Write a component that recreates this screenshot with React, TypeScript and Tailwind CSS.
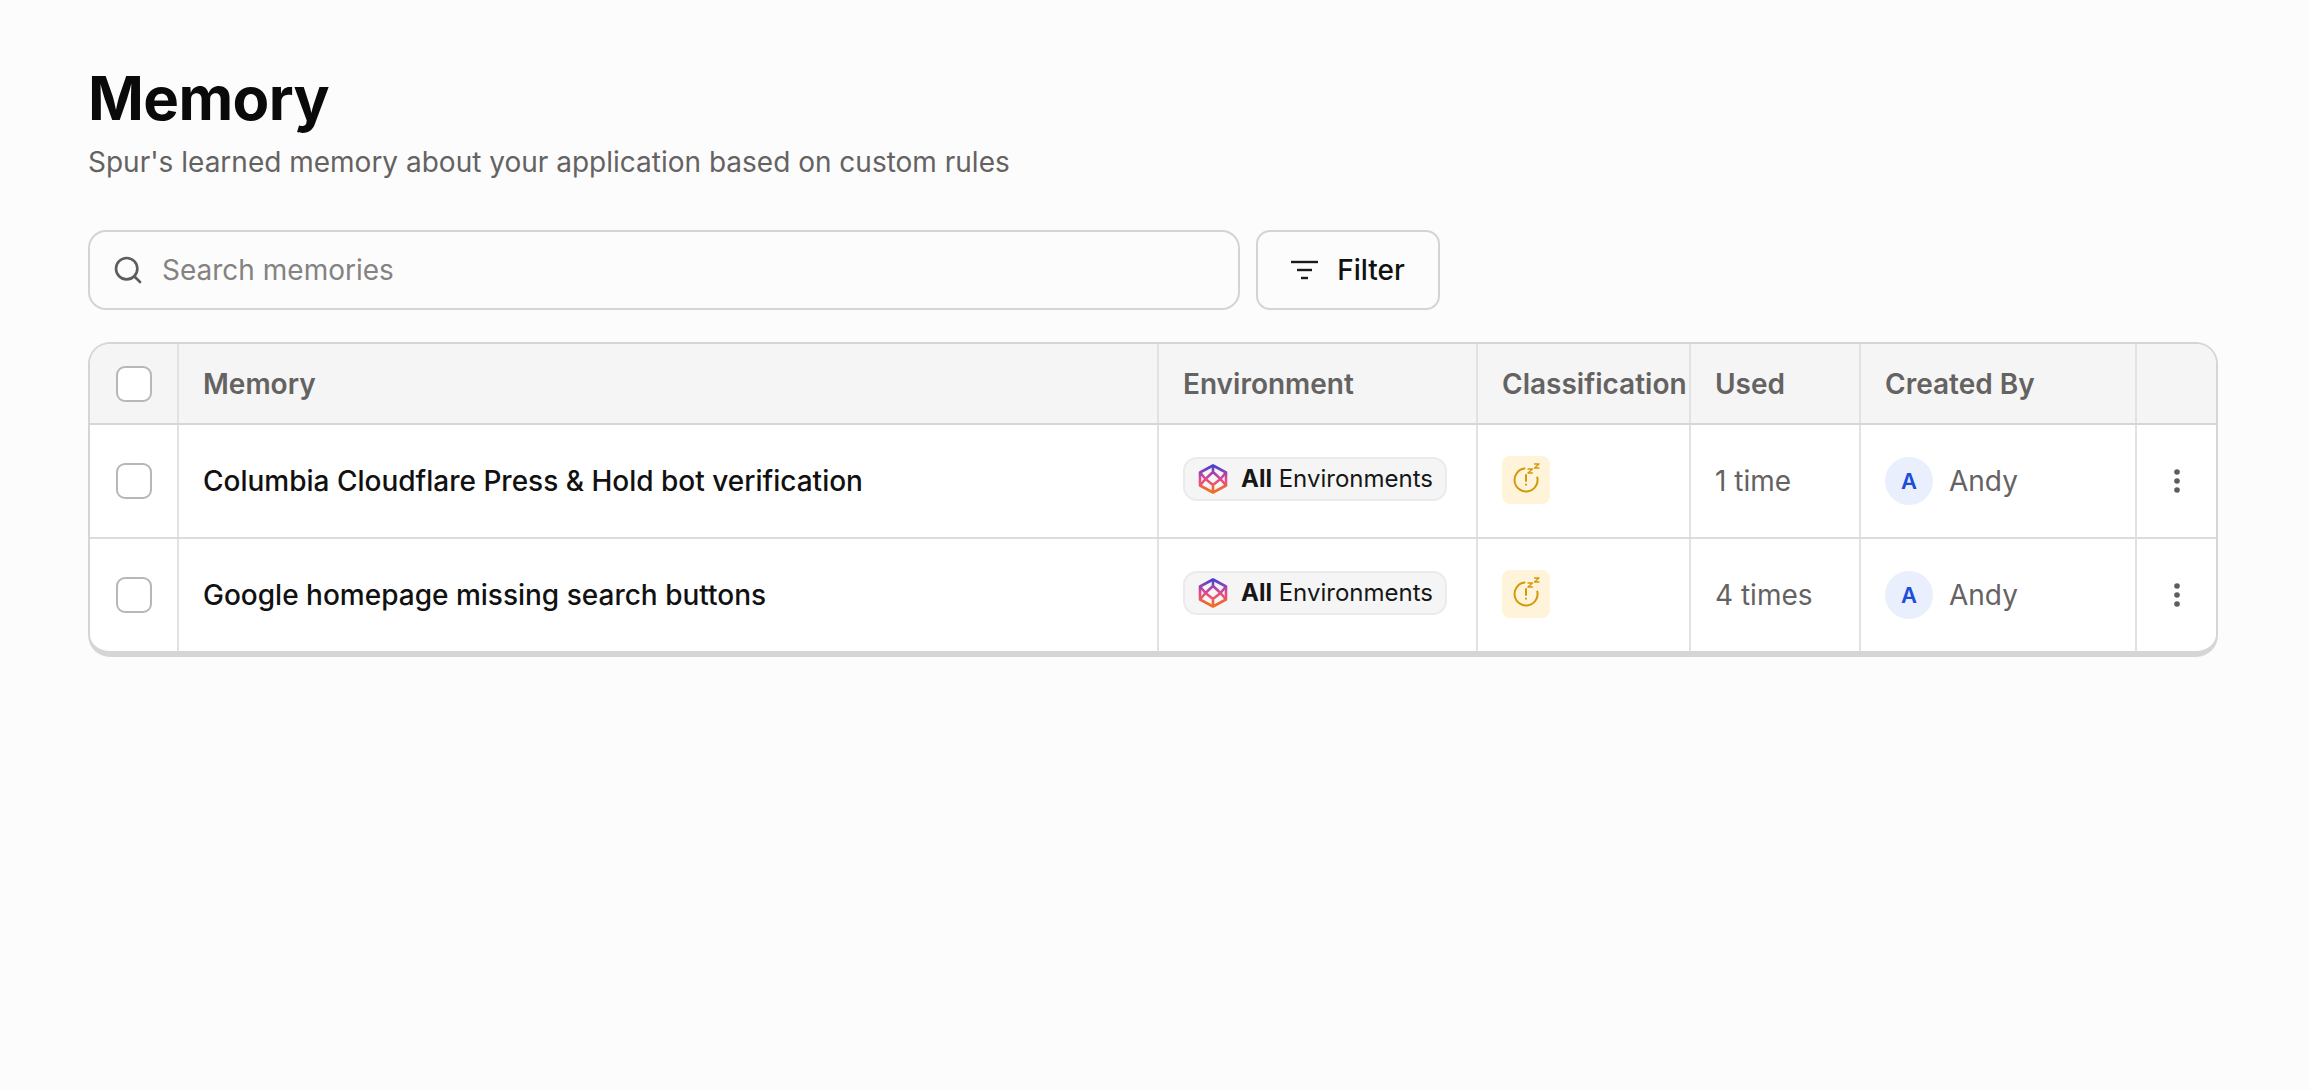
import { Search } from "lucide-react";

const rows = [
  { title: "Columbia Cloudflare Press & Hold bot verification", used: "1 time", height: "h-[114px] border-b-2 border-[#dcdcdc]" },
  { title: "Google homepage missing search buttons", used: "4 times", height: "h-[112px]" },
];

const gridCols = "grid grid-cols-[87px_980px_319px_213px_170px_276px_1fr]";

function Checkbox() {
  return <div className="h-9 w-9 rounded-[9px] border-2 border-[#b8b6b6] bg-white" />;
}

function FilterIcon() {
  return (
    <svg width="27" height="20" viewBox="0 0 27 20" fill="none" stroke="#1a1a1a" strokeWidth="2.4">
      <path d="M0 2h27" />
      <path d="M6 10h15" />
      <path d="M10 18h7" />
    </svg>
  );
}

function EnvIcon({ id }: { id: string }) {
  return (
    <svg width="30" height="30" viewBox="0 0 30 30" fill="none">
      <defs>
        <linearGradient id={id} x1="15" y1="1" x2="15" y2="29" gradientUnits="userSpaceOnUse">
          <stop offset="0" stopColor="#3f3fd8" />
          <stop offset="0.5" stopColor="#e5488f" />
          <stop offset="1" stopColor="#f47216" />
        </linearGradient>
      </defs>
      <g stroke={`url(#${id})`} strokeWidth="2.600" strokeLinejoin="round">
        <path d="M15 1.500 28 8.500v13L15 28.500 2 21.500v-13Z" />
        <path d="M15 8 22.500 15 15 21 7.500 15ZM2 8.500 7.500 15 2 21.500M28 8.500 22.500 15 28 21.500M15 1.500V8M15 21v7.500" />
      </g>
    </svg>
  );
}

function SnoozeIcon() {
  return (
    <svg width="48" height="48" viewBox="0 0 48 48" fill="none" stroke="#d19a0b" strokeWidth="2" strokeLinecap="round" strokeLinejoin="round">
      <path d="M22.500 12.600A11.500 11.500 0 1 0 35.300 21.500" />
      <path d="M24 19v6" />
      <path d="M24 28.600v.1" />
      <path d="M26 13h4.500L26 17h4.500" strokeWidth="1.400" />
      <path d="M32.500 8H37l-4.500 4H37" strokeWidth="1.300" />
    </svg>
  );
}

function DotsIcon() {
  return (
    <svg width="8" height="26" viewBox="0 0 8 26" fill="#5f5c5c">
      <circle cx="4" cy="4" r="2.800" />
      <circle cx="4" cy="13" r="2.800" />
      <circle cx="4" cy="22" r="2.800" />
    </svg>
  );
}

export default function App() {
  return (
    <div className="min-h-screen bg-[#fcfcfc] px-[88px] pt-[62px] font-['Inter',sans-serif]">
      <h1 className="text-[60px] font-bold leading-[72px] tracking-[-0.6px] text-[#0a0a0a]">Memory</h1>
      <p className="mt-[8px] text-[28px] leading-[40px] text-[#656262]">
        Spur's learned memory about your application based on custom rules
      </p>

      <div className="mt-[48px] flex gap-[16px]">
        <div className="flex h-[80px] w-[1152px] items-center gap-[18px] rounded-[18px] border-2 border-[#d4d4d4] bg-[#fcfcfc] pl-[22px]">
          <Search size={32} strokeWidth={2} className="text-[#5f5c5c]" />
          <span className="text-[28px] text-[#858282]">Search memories</span>
        </div>
        <button className="flex h-[80px] w-[184px] items-center justify-center gap-[19px] rounded-[14px] border-2 border-[#d4d4d4] bg-[#fcfcfc] text-[28px] font-medium text-[#111111]">
          <FilterIcon />
          Filter
        </button>
      </div>

      <div className="mt-[32px] w-[2130px] overflow-hidden rounded-[22px] border-2 border-b-[6px] border-[#d6d5d5] bg-white">
        <div className={`${gridCols} h-[81px] border-b-2 border-[#d6d6d6] bg-[#f5f5f5] text-[28px] font-semibold text-[#656262]`}>
          <div className="flex items-center justify-center">
            <Checkbox />
          </div>
          <div className="flex items-center border-l-2 border-[#e2e2e2] pl-[24px]">Memory</div>
          <div className="flex items-center border-l-2 border-[#e2e2e2] pl-[24px]">Environment</div>
          <div className="flex items-center whitespace-nowrap border-l-2 border-[#e2e2e2] pl-[24px]">Classification</div>
          <div className="flex items-center border-l-2 border-[#e2e2e2] pl-[24px]">Used</div>
          <div className="flex items-center border-l-2 border-[#e2e2e2] pl-[24px]">Created By</div>
          <div className="border-l-2 border-[#e2e2e2]" />
        </div>
        {rows.map((row, i) => (
          <div key={row.title} className={`${gridCols} ${row.height}`}>
            <div className="flex items-center justify-center">
              <Checkbox />
            </div>
            <div className="flex items-center border-l-2 border-[#e2e2e2] pl-[24px] text-[28px] font-medium text-[#111111]">
              {row.title}
            </div>
            <div className="flex items-center border-l-2 border-[#e2e2e2] pl-[24px]">
              <div className="mb-[4px] flex h-[44px] w-[264px] items-center gap-[13px] rounded-[14px] border-2 border-[#ebebeb] bg-[#f5f5f5] pl-[13px] text-[24px] text-[#171717]">
                <EnvIcon id={`env-${i}`} />
                <span>
                  <b className="font-bold">All</b> Environments
                </span>
              </div>
            </div>
            <div className="flex items-center border-l-2 border-[#e2e2e2] pl-[24px]">
              <div className="mb-[2px] h-[48px] w-[48px] rounded-[8px] bg-[#fff4d9]">
                <SnoozeIcon />
              </div>
            </div>
            <div className="flex items-center border-l-2 border-[#e2e2e2] pl-[24px] text-[28px] text-[#656262]">{row.used}</div>
            <div className="flex items-center gap-[16px] border-l-2 border-[#e2e2e2] pl-[24px] text-[28px] text-[#656262]">
              <div className="flex h-[48px] w-[48px] items-center justify-center rounded-full bg-[#e9effc] text-[22px] font-semibold text-[#1d4ed8]">
                A
              </div>
              Andy
            </div>
            <div className="flex items-center justify-center border-l-2 border-[#e2e2e2]">
              <DotsIcon />
            </div>
          </div>
        ))}
      </div>
    </div>
  );
}
